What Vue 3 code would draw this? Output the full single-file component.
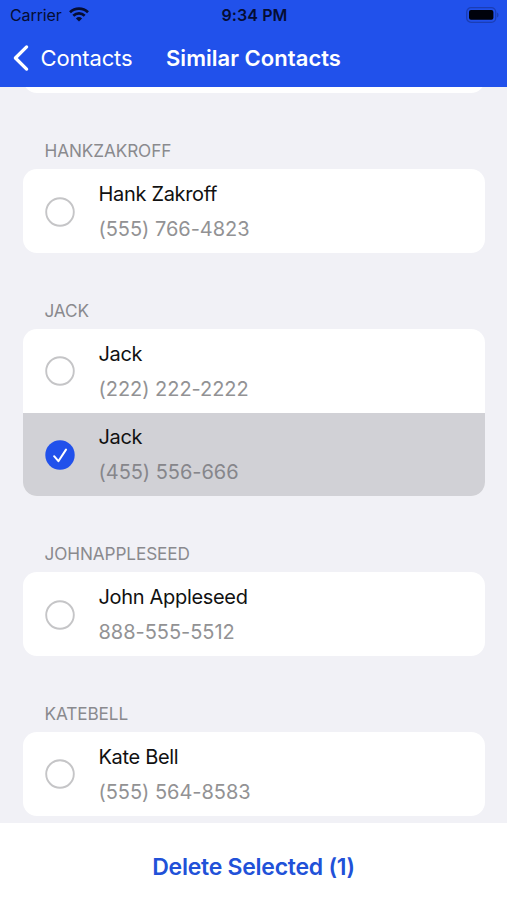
<script setup>
import { ref, computed } from 'vue'

const groups = ref([
  { key: 'HANKZAKROFF', contacts: [{ name: 'Hank Zakroff', phone: '(555) 766-4823', selected: false }] },
  {
    key: 'JACK',
    contacts: [
      { name: 'Jack', phone: '(222) 222-2222', selected: false },
      { name: 'Jack', phone: '(455) 556-666', selected: true }
    ]
  },
  { key: 'JOHNAPPLESEED', contacts: [{ name: 'John Appleseed', phone: '888-555-5512', selected: false }] },
  { key: 'KATEBELL', contacts: [{ name: 'Kate Bell', phone: '(555) 564-8583', selected: false }] }
])

const selectedCount = computed(() => groups.value.flatMap((g) => g.contacts).filter((c) => c.selected).length)
</script>

<template>
  <div class="screen">
    <header class="top">
      <div class="status">
        <div class="carrier">
          <span class="carrier-name">Carrier</span>
          <svg class="wifi" width="20" height="15" viewBox="0 0 20 15">
            <g fill="none" stroke="#050d33" stroke-width="2.7">
              <path d="M1 5.2a13 13 0 0 1 18 0" />
              <path d="M4.3 8.7a8.3 8.3 0 0 1 11.4 0" />
            </g>
            <path d="M6.9 11.4a4.7 4.7 0 0 1 6.2 0L10 14.5z" fill="#050d33" />
          </svg>
        </div>
        <span class="time">9:34 PM</span>
        <svg class="battery" width="33" height="16" viewBox="0 0 33 16">
          <rect x="0.7" y="0.7" width="29" height="14.6" rx="4.4" fill="none" stroke="#1b3eb5" stroke-width="1.3" />
          <rect x="3" y="3" width="24.4" height="9.8" rx="2" fill="#00020c" />
          <path d="M31 5.4q1.6.8 1.6 2.6T31 10.6z" fill="#1b3eb5" />
        </svg>
      </div>
      <nav class="nav">
        <button class="back" type="button">
          <svg width="17" height="28" viewBox="0 0 17 28">
            <path d="M14.6 2.9 3.4 14l11.2 11.1" fill="none" stroke="#fff" stroke-width="3.3" stroke-linecap="round" stroke-linejoin="round" />
          </svg>
          <span class="back-label">Contacts</span>
        </button>
        <h1 class="title">Similar Contacts</h1>
      </nav>
    </header>

    <main class="list">
      <div class="card-end"></div>
      <section v-for="group in groups" :key="group.key">
        <h2 class="group-title"><span>{{ group.key }}</span></h2>
        <ul class="card">
          <li
            v-for="contact in group.contacts"
            :key="contact.phone"
            class="row"
            :class="{ selected: contact.selected }"
            @click="contact.selected = !contact.selected"
          >
            <svg class="check" width="30" height="30" viewBox="0 0 30 30">
              <template v-if="contact.selected">
                <circle cx="15" cy="15" r="14.7" fill="#2151eb" />
                <path d="m9.1 16.2 4.3 5L21 9.6" fill="none" stroke="#fff" stroke-width="2" stroke-linecap="round" stroke-linejoin="round" />
              </template>
              <circle v-else cx="15" cy="15" r="13.8" fill="none" stroke="#c5c5c7" stroke-width="1.9" />
            </svg>
            <div class="info">
              <span class="name">{{ contact.name }}</span>
              <span class="phone">{{ contact.phone }}</span>
            </div>
          </li>
        </ul>
      </section>
    </main>

    <footer class="bottom">
      <button class="delete" type="button">Delete Selected ({{ selectedCount }})</button>
    </footer>
  </div>
</template>

<style>
body {
  margin: 0;
  overflow: hidden;
}
</style>

<style scoped>
.screen {
  width: 507px;
  height: 900px;
  display: flex;
  flex-direction: column;
  overflow: hidden;
  background: #f1f1f6;
  font-family: Inter, 'Liberation Sans', sans-serif;
}

button {
  border: 0;
  padding: 0;
  background: none;
  font-family: inherit;
}

.top {
  height: 87px;
  flex: none;
  background: #2151eb;
}

.status {
  height: 29px;
  display: grid;
  grid-template-columns: 1fr auto 1fr;
  align-items: center;
  padding: 0 8px 0 10px;
  color: #050d33;
  font-size: 16px;
}

.carrier {
  display: flex;
  align-items: center;
  gap: 7px;
}

.carrier-name {
  letter-spacing: -0.1px;
}

.time {
  font-weight: 600;
  letter-spacing: 0.1px;
}

.battery {
  justify-self: end;
}

.nav {
  height: 58px;
  display: grid;
  grid-template-columns: 1fr auto 1fr;
  align-items: center;
  color: #fff;
}

.back {
  display: flex;
  align-items: center;
  gap: 12px;
  padding-left: 11.5px;
  color: #fff;
  font-size: 22px;
  letter-spacing: -0.15px;
}

.title {
  margin: 0;
  font-size: 22px;
  font-weight: 600;
  letter-spacing: 0.04px;
}

.list {
  flex: 1;
  min-height: 0;
  overflow: hidden;
  padding: 0 22px 0 22.5px;
}

.card-end {
  height: 28px;
  margin-top: -22px;
  border-radius: 14px;
  background: #fff;
}

.group-title {
  height: 76.3px;
  box-sizing: border-box;
  display: flex;
  align-items: flex-end;
  margin: 0;
  padding: 0 0 7.5px 22px;
  color: #8a8a8e;
  font-size: 17.2px;
  font-weight: 400;
  line-height: 22px;
  letter-spacing: -0.1px;
}

.card {
  margin: 0;
  padding: 0;
  list-style: none;
  overflow: hidden;
  border-radius: 14px;
  background: #fff;
}

.row {
  height: 83.5px;
  box-sizing: border-box;
  display: flex;
  align-items: center;
  gap: 24px;
  padding: 1px 0 0 22px;
}

.row.selected {
  background: #d1d1d6;
}

.check {
  flex: none;
}

.info {
  display: flex;
  flex-direction: column;
  gap: 7px;
  font-size: 20px;
  line-height: 28px;
}

.name {
  color: #111;
  letter-spacing: -0.32px;
}

.phone {
  color: #929294;
  letter-spacing: -0.04px;
}

.selected .phone {
  color: #86868b;
}

.bottom {
  height: 77px;
  flex: none;
  display: flex;
  justify-content: center;
  background: #fff;
}

.delete {
  height: 88px;
  color: #2151d8;
  font-size: 23px;
  font-weight: 600;
  letter-spacing: -0.26px;
}
</style>
